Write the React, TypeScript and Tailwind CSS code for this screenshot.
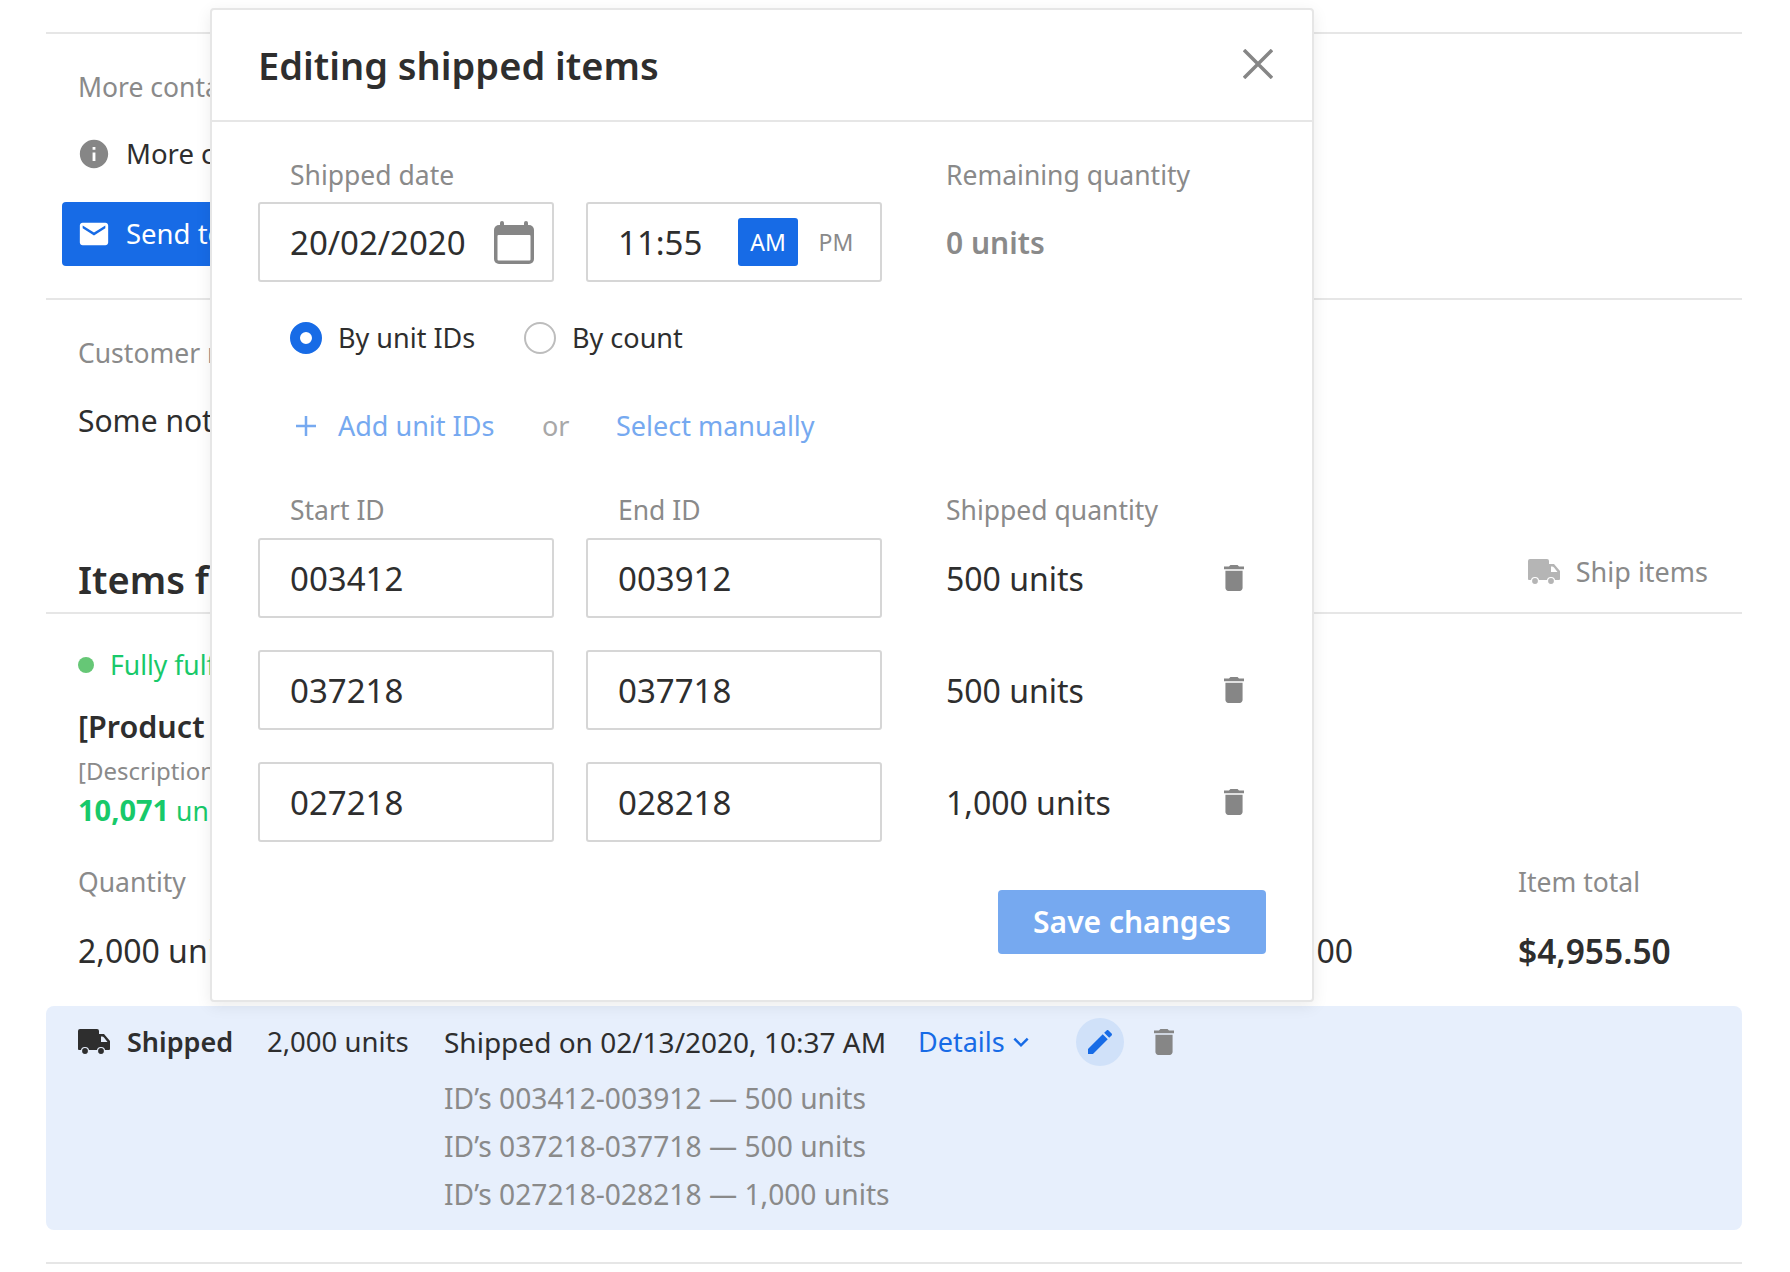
const trash = "M6 19c0 1.1.9 2 2 2h8c1.1 0 2-.9 2-2V7H6v12zM19 4h-3.5l-1-1h-5l-1 1H5v2h14V4z";

function Icon({ d, className }: { d: string; className?: string }) {
  return (
    <svg viewBox="0 0 24 24" fill="currentColor" className={className}>
      <path d={d} />
    </svg>
  );
}

function TrashIcon() {
  return (
    <svg viewBox="5 3 14 18" preserveAspectRatio="none" fill="currentColor" className="w-[20px] h-[26px] text-[#868686]">
      <path d={trash} />
    </svg>
  );
}

function TruckIcon({ bg, className }: { bg: string; className?: string }) {
  return (
    <svg viewBox="0 0 32 26" fill="currentColor" className={className}>
      <path
        fillRule="evenodd"
        d="M2 0h17a2 2 0 0 1 2 2v3h5l6 7v8a1 1 0 0 1-1 1H1a1 1 0 0 1-1-1V2a2 2 0 0 1 2-2zM23 7.5V13h6.5L26 8.5a2.5 2.5 0 0 0-2-1z"
      />
      <circle cx="7" cy="22" r="3.5" stroke={bg} strokeWidth="1.2" />
      <circle cx="23" cy="22" r="3.5" stroke={bg} strokeWidth="1.2" />
    </svg>
  );
}

function Field({ value }: { value: string }) {
  return (
    <div className="h-[80px] border-2 border-[#d6d6d6] rounded-[3px] pl-[30px] pt-[2px] flex items-center text-[33px] text-[#2e2e2e]">
      {value}
    </div>
  );
}

const rows = [
  { start: "003412", end: "003912", qty: "500 units" },
  { start: "037218", end: "037718", qty: "500 units" },
  { start: "027218", end: "028218", qty: "1,000 units" },
];

const details = [
  "ID’s 003412-003912 — 500 units",
  "ID’s 037218-037718 — 500 units",
  "ID’s 027218-028218 — 1,000 units",
];

export default function App() {
  return (
    <div className="relative h-[1272px] overflow-hidden bg-white pl-[46px] pr-[48px] pt-[32px] font-['Noto_Sans',sans-serif] text-[28px] leading-[36px] text-[#2e2e2e]">
      {/* page behind the dialog */}
      <div className="border-t-2 border-[#e6e6e6] pl-[32px] pt-[35px] pb-[32px]">
        <div className="text-[26.5px] text-[#8a8a8a]">More contact info</div>
        <div className="mt-[31px] flex items-center text-[27.5px]">
          <Icon d="M12 2C6.48 2 2 6.48 2 12s4.48 10 10 10 10-4.48 10-10S17.52 2 12 2zm1 15h-2v-6h2v6zm0-8h-2V7h2v2z" className="w-[34px] h-[34px] -ml-[1px] mr-[15px] text-[#868686]" />
          More contact information
        </div>
        <div className="mt-[30px] -ml-[16px] w-[420px] h-[64px] rounded-[4px] bg-[#176be6] flex items-center text-[27.5px] text-white">
          <Icon d="M20 4H4c-1.1 0-1.99.9-1.99 2L2 18c0 1.1.9 2 2 2h16c1.1 0 2-.9 2-2V6c0-1.1-.9-2-2-2zm0 4l-8 5-8-5V6l8 5 8-5v2z" className="w-[34px] h-[34px] ml-[15px] mr-[15px]" />
          Send to customer
        </div>
      </div>
      <div className="border-t-2 border-[#e6e6e6] pl-[32px] pt-[35px]">
        <div className="text-[26.5px] text-[#8a8a8a]">Customer notes</div>
        <div className="mt-[32px] text-[30px]">Some notes here</div>
      </div>

      <div className="mt-[116px] h-[59px] border-b-2 border-[#e6e6e6] pl-[32px] pr-[34px] flex justify-between">
        <div className="text-[38px] leading-[48px] font-semibold">Items fulfillment</div>
        <div className="flex items-center h-[34px] text-[27px] text-[#8a8a8a]">
          <TruckIcon bg="#ffffff" className="w-[32px] h-[26px] mr-[16px] text-[#b5b5b5]" />
          Ship items
        </div>
      </div>

      <div className="pl-[32px] pt-[33px]">
        <div className="flex items-center text-[26.5px] text-[#18c96a]">
          <span className="w-[16px] h-[16px] rounded-full bg-[#66c776] mr-[16px]" />
          Fully fulfilled
        </div>
        <div className="mt-[23px] text-[30.5px] leading-[40px] font-semibold">[Product name]</div>
        <div className="mt-[9px] text-[24px] leading-[32px] text-[#8a8a8a]">[Description]</div>
        <div className="mt-[5px] text-[26.5px] text-[#18c96a]">
          <span className="text-[29px] font-bold">10,071</span> units
        </div>
        <div className="mt-[35px] grid grid-cols-[1440px_1fr] text-[26.5px] text-[#8a8a8a]">
          <div>Quantity</div>
          <div>Item total</div>
        </div>
        <div className="mt-[33px] grid grid-cols-[1110px_165px_165px_1fr] text-[32px]">
          <div>2,000 units</div>
          <div className="text-right">
            $2.48<span className="ml-[4px]">00</span>
          </div>
          <div />
          <div className="text-[33.5px] font-semibold">$4,955.50</div>
        </div>
      </div>

      <div className="mt-[37px] h-[224px] rounded-[8px] bg-[#e7effc] pl-[32px] pt-[12px]">
        <div className="flex items-center h-[48px]">
          <TruckIcon bg="#e7effc" className="w-[32px] h-[26px] mr-[17px] text-[#2e2e2e]" />
          <div className="w-[140px] text-[27px] font-semibold">Shipped</div>
          <div className="w-[177px] text-[27.5px]">2,000 units</div>
          <div className="w-[474px]">Shipped on 02/13/2020, 10:37 AM</div>
          <div className="w-[158px] flex items-center text-[27px] text-[#176be6]">
            Details
            <svg viewBox="0 0 24 24" fill="none" stroke="currentColor" strokeWidth="3" className="w-[20px] h-[20px] ml-[6px]">
              <path d="M4 8l8 8 8-8" />
            </svg>
          </div>
          <div className="w-[48px] h-[48px] rounded-full bg-[#d0e1f9] flex items-center justify-center">
            <Icon d="M3 17.25V21h3.75L17.81 9.94l-3.75-3.75L3 17.25zM20.71 7.04c.39-.39.39-1.02 0-1.41l-2.34-2.34c-.39-.39-1.02-.39-1.41 0l-1.83 1.83 3.75 3.75 1.83-1.83z" className="w-[32px] h-[32px] text-[#176be6]" />
          </div>
          <div className="ml-[30px]">
            <TrashIcon />
          </div>
        </div>
        <div className="mt-[14px] ml-[366px] flex flex-col gap-[12px] text-[28.2px] text-[#8a8a8a]">
          {details.map((line) => (
            <div key={line}>{line}</div>
          ))}
        </div>
      </div>
      <div className="mt-[32px] border-t-2 border-[#e6e6e6]" />

      {/* dialog */}
      <div className="absolute left-[210px] top-[8px] w-[1104px] h-[994px] bg-white border-2 border-[#e6e6e6] rounded-[4px] shadow-[0_4px_16px_rgba(0,0,0,0.08)]">
        <div className="h-[112px] border-b-2 border-[#e6e6e6] pl-[46px] pr-[39px] flex items-center justify-between">
          <div className="-mt-[1px] text-[38px] leading-[48px] font-semibold">Editing shipped items</div>
          <svg viewBox="0 0 30 30" fill="none" stroke="#868686" strokeWidth="3.5" className="w-[30px] h-[30px] -mt-[3px]">
            <path d="M1 1l28 28M29 1L1 29" />
          </svg>
        </div>

        <div className="pl-[46px] pt-[35px]">
          <div className="grid grid-cols-[296px_296px_1fr] gap-x-[32px] text-[26.5px] text-[#8a8a8a]">
            <div className="pl-[32px]">Shipped date</div>
            <div />
            <div className="pl-[32px]">Remaining quantity</div>
          </div>
          <div className="mt-[9px] grid grid-cols-[296px_296px_1fr] gap-x-[32px]">
            <div className="h-[80px] border-2 border-[#d6d6d6] rounded-[3px] pl-[30px] pr-[18px] flex items-center justify-between text-[33px]">
              <span className="pt-[2px]">20/02/2020</span>
              <svg viewBox="0 0 40 43" className="w-[40px] h-[43px]">
                <rect x="6" width="4" height="8" rx="2" fill="#868686" />
                <rect x="30" width="4" height="8" rx="2" fill="#868686" />
                <rect y="4" width="40" height="39" rx="5" fill="#868686" />
                <rect x="3.5" y="14" width="33" height="25.5" rx="1" fill="#fff" />
              </svg>
            </div>
            <div className="h-[80px] border-2 border-[#d6d6d6] rounded-[3px] pl-[30px] flex items-center text-[33px]">
              <div className="w-[120px] pt-[2px]">11:55</div>
              <div className="w-[60px] h-[48px] rounded-[3px] bg-[#176be6] text-white text-[23px] flex items-center justify-center">AM</div>
              <div className="w-[76px] text-center text-[23px] text-[#8a8a8a]">PM</div>
            </div>
            <div className="pl-[32px] pt-[2px] flex items-center text-[30px] text-[#8a8a8a] font-semibold">0 units</div>
          </div>

          <div className="mt-[38px] pl-[32px] flex items-center text-[27px]">
            <span className="w-[32px] h-[32px] rounded-full border-[10px] border-[#176be6] mr-[16px]" />
            <div className="w-[186px]">By unit IDs</div>
            <span className="w-[32px] h-[32px] rounded-full border-2 border-[#bdbdbd] mr-[16px]" />
            <div>By count</div>
          </div>

          <div className="mt-[52px] pl-[38px] flex items-center text-[27px] text-[#76a9f0]">
            <svg viewBox="0 0 20 20" fill="none" stroke="currentColor" strokeWidth="2.5" className="w-[20px] h-[20px] mr-[22px]">
              <path d="M10 0v20M0 10h20" />
            </svg>
            <div className="w-[204px]">Add unit IDs</div>
            <div className="w-[74px] text-[#a8a8a8]">or</div>
            <div>Select manually</div>
          </div>

          <div className="mt-[48px] grid grid-cols-[296px_296px_1fr] gap-x-[32px] text-[26.5px] text-[#8a8a8a]">
            <div className="pl-[32px]">Start ID</div>
            <div className="pl-[32px]">End ID</div>
            <div className="pl-[32px]">Shipped quantity</div>
          </div>
          <div className="mt-[10px] flex flex-col gap-y-[32px]">
            {rows.map((row) => (
              <div key={row.start} className="grid grid-cols-[296px_296px_1fr] gap-x-[32px]">
                <Field value={row.start} />
                <Field value={row.end} />
                <div className="pl-[32px] pr-[68px] flex items-center justify-between text-[32px]">
                  <span className="pt-[2px]">{row.qty}</span>
                  <TrashIcon />
                </div>
              </div>
            ))}
          </div>

          <div className="mt-[48px] pr-[46px] flex justify-end">
            <div className="w-[268px] h-[64px] rounded-[4px] bg-[#76a9f0] text-white text-[30px] font-semibold flex items-center justify-center">
              Save changes
            </div>
          </div>
        </div>
      </div>
    </div>
  );
}
